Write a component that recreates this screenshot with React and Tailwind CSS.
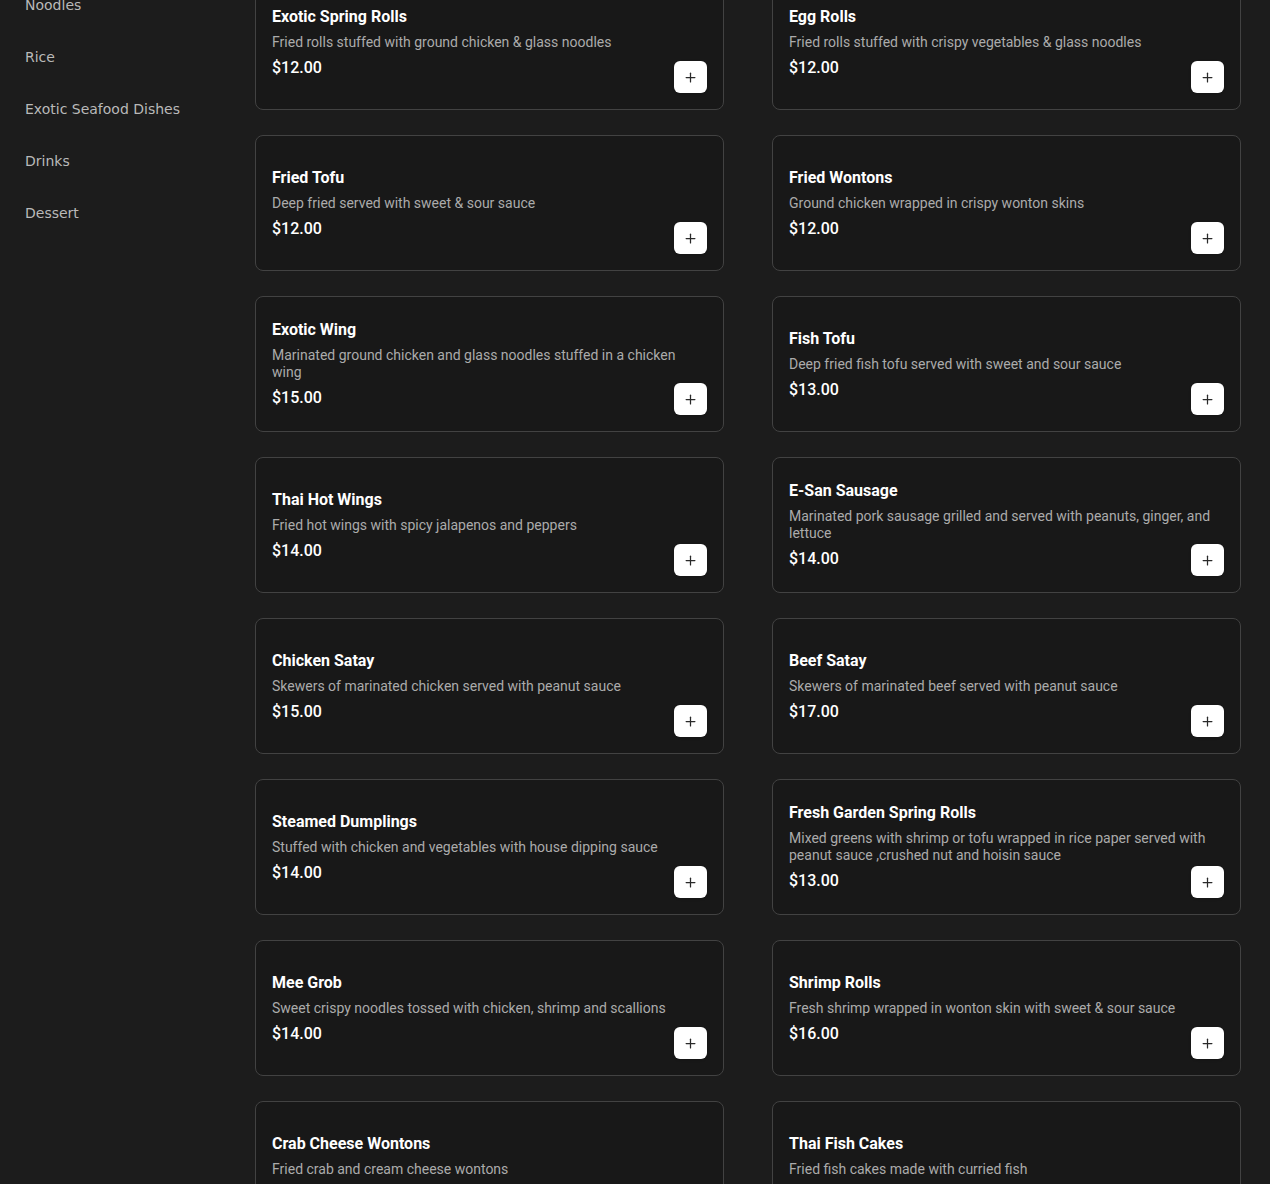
import { Plus } from 'lucide-react';

const categories = ['Noodles', 'Rice', 'Exotic Seafood Dishes', 'Drinks', 'Dessert'];

const items = [
  { name: 'Exotic Spring Rolls', desc: 'Fried rolls stuffed with ground chicken & glass noodles', price: '$12.00' },
  { name: 'Egg Rolls', desc: 'Fried rolls stuffed with crispy vegetables & glass noodles', price: '$12.00' },
  { name: 'Fried Tofu', desc: 'Deep fried served with sweet & sour sauce', price: '$12.00' },
  { name: 'Fried Wontons', desc: 'Ground chicken wrapped in crispy wonton skins', price: '$12.00' },
  { name: 'Exotic Wing', desc: 'Marinated ground chicken and glass noodles stuffed in a chicken wing', price: '$15.00' },
  { name: 'Fish Tofu', desc: 'Deep fried fish tofu served with sweet and sour sauce', price: '$13.00' },
  { name: 'Thai Hot Wings', desc: 'Fried hot wings with spicy jalapenos and peppers', price: '$14.00' },
  { name: 'E-San Sausage', desc: 'Marinated pork sausage grilled and served with peanuts, ginger, and lettuce', price: '$14.00' },
  { name: 'Chicken Satay', desc: 'Skewers of marinated chicken served with peanut sauce', price: '$15.00' },
  { name: 'Beef Satay', desc: 'Skewers of marinated beef served with peanut sauce', price: '$17.00' },
  { name: 'Steamed Dumplings', desc: 'Stuffed with chicken and vegetables with house dipping sauce', price: '$14.00' },
  { name: 'Fresh Garden Spring Rolls', desc: 'Mixed greens with shrimp or tofu wrapped in rice paper served with peanut sauce ,crushed nut and hoisin sauce', price: '$13.00' },
  { name: 'Mee Grob', desc: 'Sweet crispy noodles tossed with chicken, shrimp and scallions', price: '$14.00' },
  { name: 'Shrimp Rolls', desc: 'Fresh shrimp wrapped in wonton skin with sweet & sour sauce', price: '$16.00' },
  { name: 'Crab Cheese Wontons', desc: 'Fried crab and cream cheese wontons', price: '$14.00' },
  { name: 'Thai Fish Cakes', desc: 'Fried fish cakes made with curried fish', price: '$14.00' },
];

function MenuCard({ item }) {
  return (
    <div className="relative h-[136px] bg-[#181818] border border-[#424242] rounded-lg p-4 flex flex-col justify-center font-['Roboto',sans-serif]">
      <p className="text-white text-base font-bold leading-6">{item.name}</p>
      <p className="mt-[5px] text-[#ababab] text-sm leading-[17px]">{item.desc}</p>
      <p className="mt-[5px] text-white text-base font-medium leading-6">{item.price}</p>
      <button className="absolute right-4 bottom-4 w-[33px] h-8 bg-white rounded-md shadow-sm flex items-center justify-center">
        <Plus size={15} strokeWidth={2} className="text-[#2a2a2a]" />
      </button>
    </div>
  );
}

export default function App() {
  return (
    <div className="h-[1184px] overflow-hidden bg-[#1c1c1c]">
      <div className="flex -mt-[26px]">
        <aside className="w-[255px] shrink-0 pl-[25px] pt-[5px]">
          <ul className="font-['DejaVu_Sans',sans-serif] text-sm text-[#b9b9b9]">
            {categories.map((c) => (
              <li key={c} className="py-4 leading-5">{c}</li>
            ))}
          </ul>
        </aside>
        <main className="flex-1 pr-[29px]">
          <div className="grid grid-cols-2 gap-x-[48px] gap-y-[25px]">
            {items.map((item) => (
              <MenuCard key={item.name} item={item} />
            ))}
          </div>
        </main>
      </div>
    </div>
  );
}
